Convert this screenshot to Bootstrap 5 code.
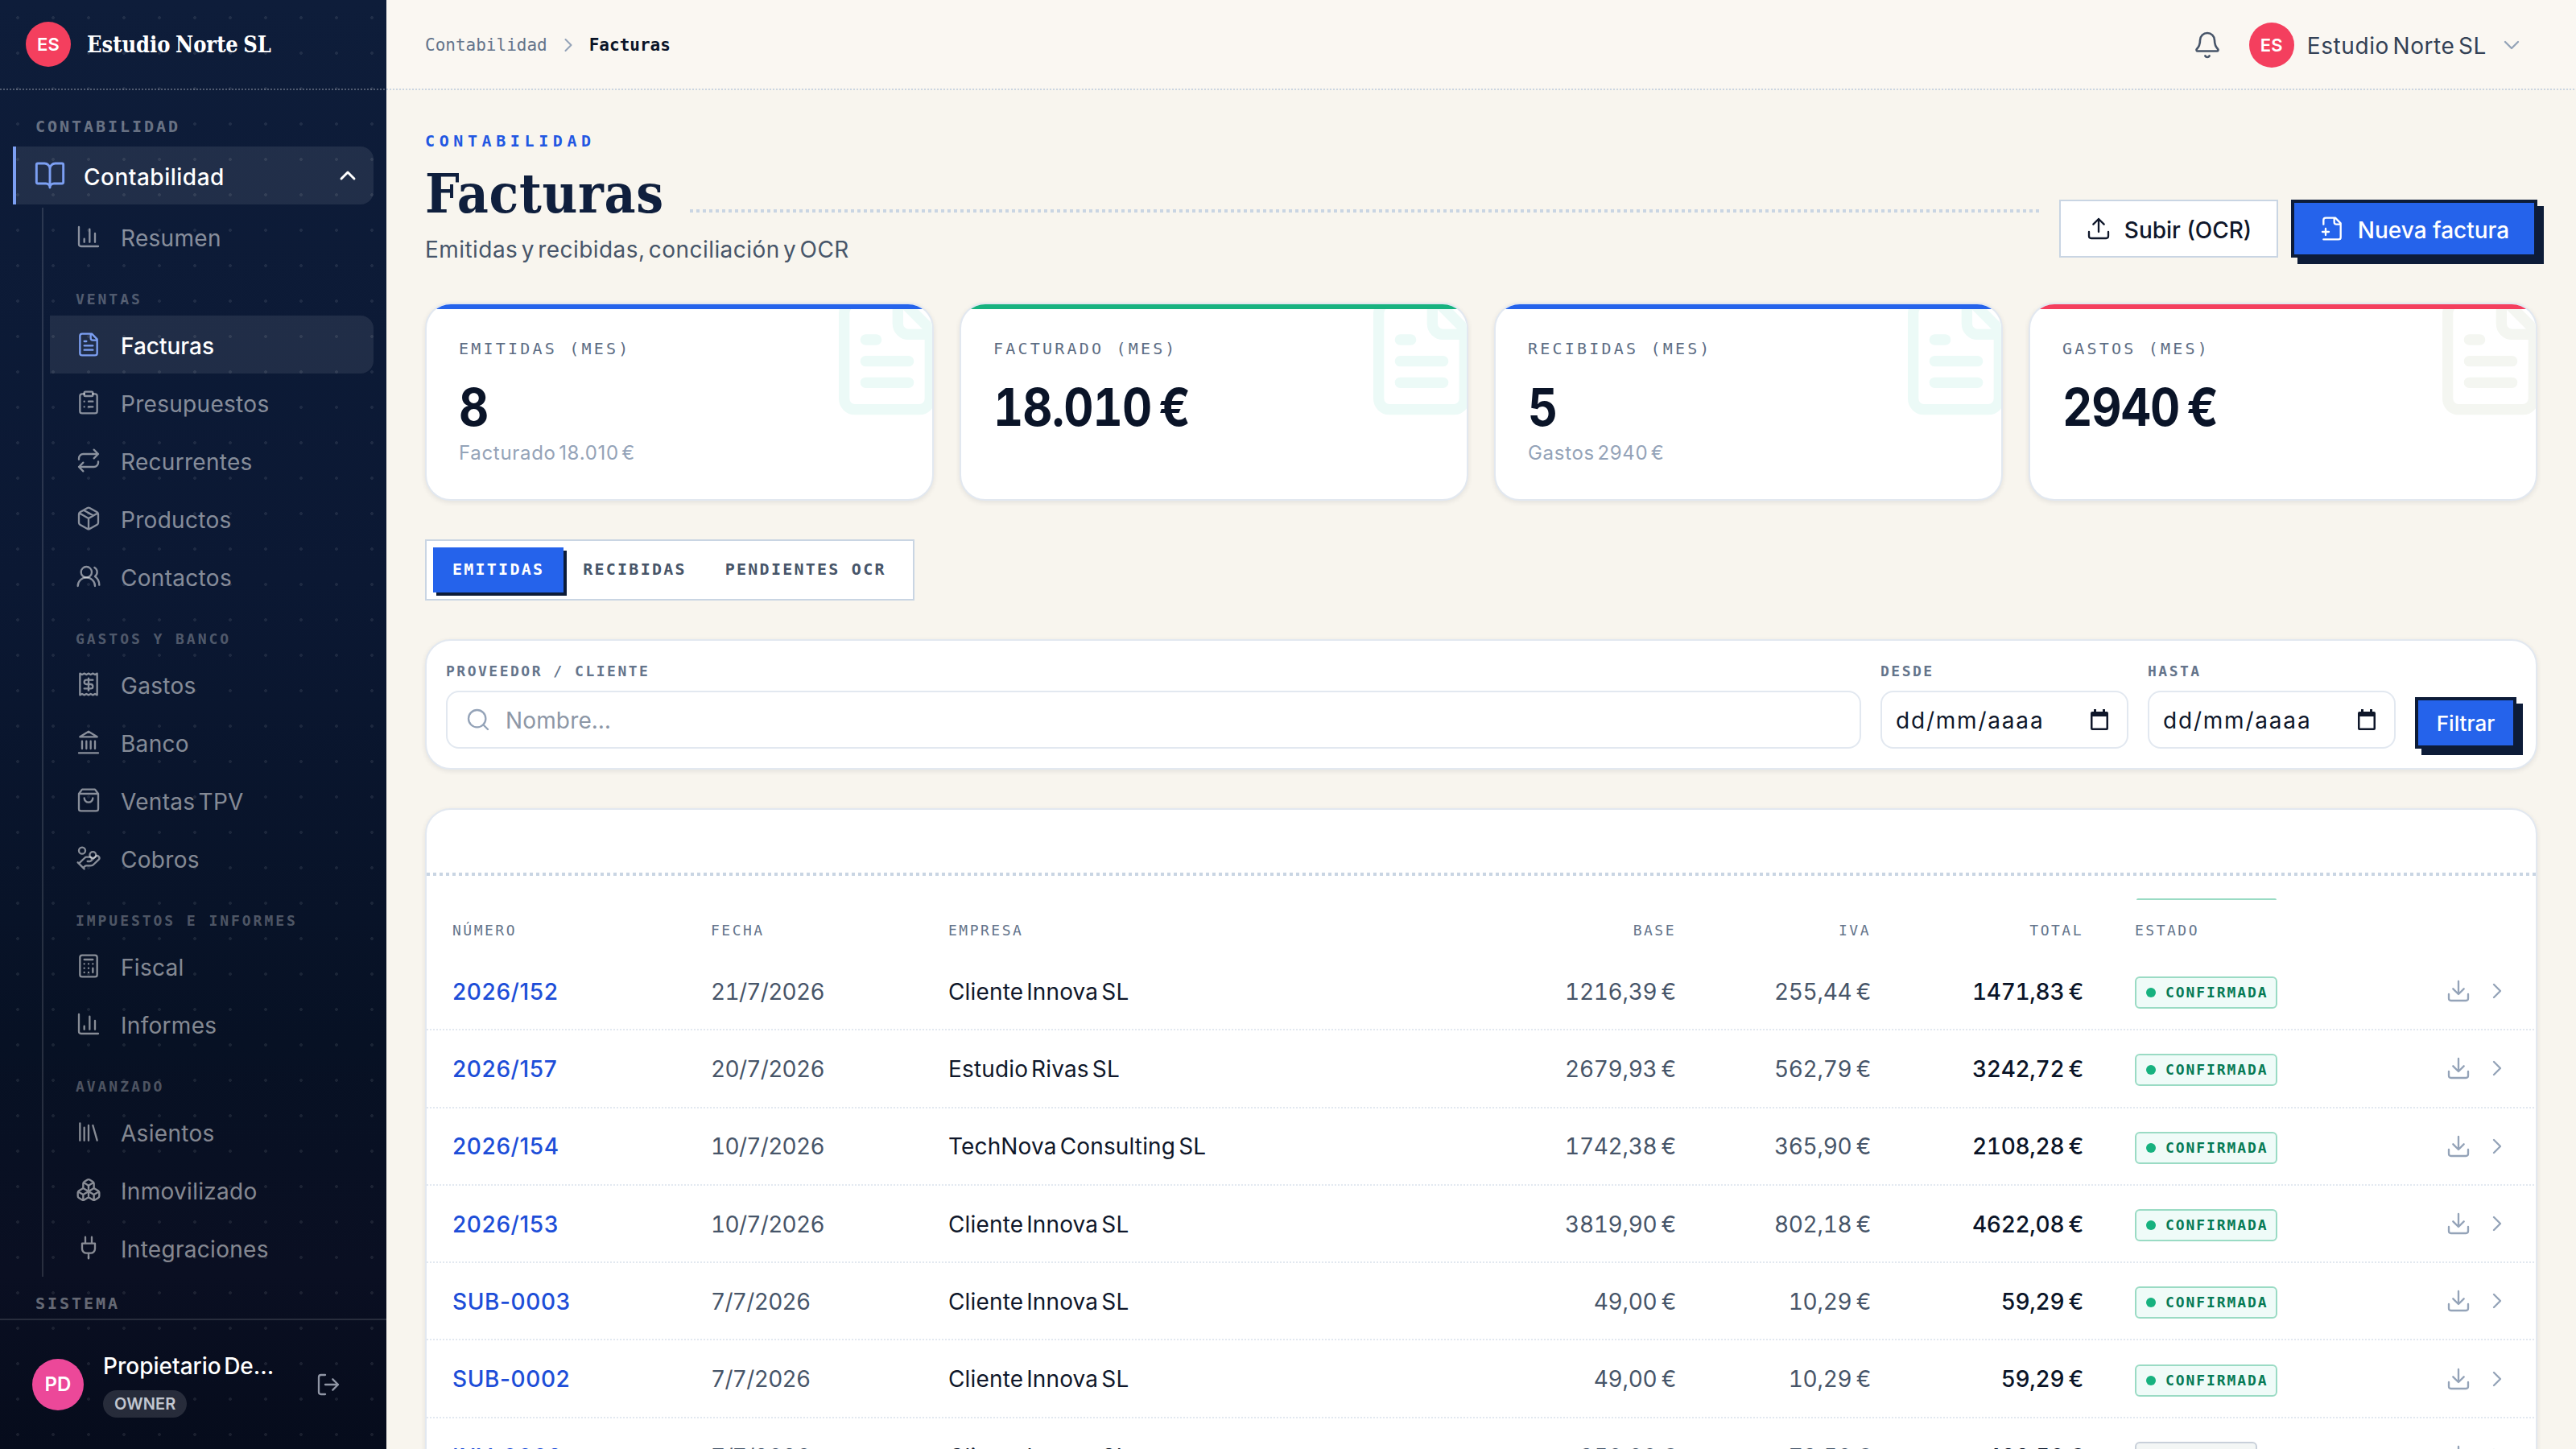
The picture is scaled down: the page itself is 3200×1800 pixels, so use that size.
<!DOCTYPE html>
<html lang="es">
<head>
<meta charset="utf-8">
<title>Facturas · Estudio Norte SL</title>
<link rel="stylesheet" href="https://cdn.jsdelivr.net/npm/bootstrap@5.3.0/dist/css/bootstrap.min.css">
<style>
:root{--navy:#0d1c38;--ink:#0a1428;--blue:#2563eb;--line:#c9d5e3;--soft:#e2e8f0;--mono:"DejaVu Sans Mono",monospace}
html,body{height:100%}
body{background:#f8f5ee;color:#0f172a;font:400 28px/36px Inter,"Noto Sans",sans-serif;overflow:hidden;letter-spacing:.15px;word-spacing:-4px}
svg{display:block;flex:none;fill:none;stroke:currentColor;stroke-width:1.75;stroke-linecap:round;stroke-linejoin:round}
.i32{width:32px;height:32px}.i36{width:36px;height:36px}.i40{width:40px;height:40px}.i28{width:28px;height:28px}
.shell{height:1800px;width:3200px;overflow:hidden}
.side{width:480px;flex:none;background:radial-gradient(circle at 50% 50%,rgba(255,255,255,.08) 0 1.6px,transparent 2.2px) 0 0/44px 44px,linear-gradient(180deg,#0e1d3a 0,#0b1833 40%,#071124 72%,#0a0f22 88%,#060c1c 100%)}
.dots2{height:2px;flex:none;background:repeating-linear-gradient(90deg,var(--dc) 0 2px,transparent 2px 4px)}
.dots4{height:4px;background:repeating-linear-gradient(90deg,var(--line) 0 4px,transparent 4px 8px)}
.brand{height:110px;padding-left:32px;gap:20px}
.avatar{width:56px;height:56px;border-radius:50%;background:#f43f5e;color:#fff;font-size:22px;font-weight:600;flex:none}
.brand b{font:700 27px/36px "DejaVu Serif Condensed","DejaVu Serif",serif;font-stretch:condensed;color:#fff;letter-spacing:0;word-spacing:-2px;padding-top:1px}
.cap1{font:700 20px/24px var(--mono);letter-spacing:2.95px;word-spacing:0;color:rgba(255,255,255,.4);padding-left:44px}
.cap2{font:700 18px/22px var(--mono);letter-spacing:2.95px;word-spacing:0;color:rgba(255,255,255,.3);padding:31px 0 9px 32px}
.parent{height:72px;margin:13px 16px 4px;border-left:4px solid #7c9ff2;border-radius:0 16px 16px 0;background:rgba(255,255,255,.085);color:#fff;font-weight:500;padding:0 16px 0 22px}
.parent span{padding:3px 0 0 22px;letter-spacing:.5px}
.sub{margin-left:52px;border-left:2px solid rgba(255,255,255,.13);padding:0 16px 0 8px;height:1328px}
.leaf{height:72px;padding-left:32px;gap:24px;color:rgba(255,255,255,.52);border-radius:0 16px 16px 0;letter-spacing:.3px}
.leaf span{padding-top:3px}
.leaf.on{background:rgba(255,255,255,.085);color:#fff;font-weight:500;letter-spacing:0}
.leaf.on svg,.parent>svg:first-child{color:#7c9ff2}
.foot{height:162px;border-top:2px solid rgba(255,255,255,.13);padding:0 56px 0 40px;gap:24px}
.foot .avatar{width:64px;height:64px;background:#ec4899;font-size:24px}
.owner{font-weight:500;letter-spacing:0}
.role{display:inline-block;background:rgba(255,255,255,.13);border-radius:17px;height:34px;font-size:20px;line-height:34px;font-weight:600;color:#c2c6cf;padding:0 14px;letter-spacing:.1px}
.top{height:110px;background:#faf7f2;padding:2px 64px 0 48px}
.top #user{letter-spacing:.6px;padding-top:2px;color:#334155}
.crumb{font:400 21px/30px var(--mono);letter-spacing:0;word-spacing:0;color:#64748b}
.crumb b{color:var(--ink)}
.page{padding:48px 48px 0}
.eyebrow{font:700 20px/24px var(--mono);letter-spacing:5.6px;color:#2257e2;margin-top:3px}
h1.title{font:700 67px/72px "DejaVu Serif Condensed","DejaVu Serif",serif;font-stretch:condensed;color:#0f1f3d;margin:0;letter-spacing:.7px;padding-top:1px;height:72px}
.btn{--bs-btn-border-radius:0;font-size:28px;line-height:36px;font-weight:500;display:flex;align-items:center;padding:0;justify-content:center}
.btn span{padding-top:3px}
.btn-o{height:72px;width:272px;border:2px solid var(--line);background:#fff;color:#0f172a;gap:16px}
.btn-n{height:72px;width:306px;border:4px solid var(--navy);background:var(--blue);color:#fff;gap:16px;box-shadow:8px 8px 0 var(--navy)}
.panel{background:#fff;border:2px solid var(--soft);border-radius:32px;box-shadow:0 2px 6px rgba(15,23,42,.09)}
.kpi{position:relative;overflow:hidden;flex:1;height:246px;padding:41px 40px 0}
.kpi::before{content:"";position:absolute;left:0;right:0;top:0;height:6px;background:var(--c);z-index:1}
.kpi>svg{position:absolute;right:-24px;top:-16px;width:160px;height:160px;stroke-width:2;color:#ecfaf7}
.kpi.warm>svg{color:#f4f6f1}
.kl{font:400 20px/28px var(--mono);letter-spacing:3.2px;word-spacing:0;color:#5d6d84}
.kv{font-size:64px;line-height:80px;font-weight:700;color:var(--ink);margin-top:19px;font-variant-numeric:tabular-nums;letter-spacing:-1px;word-spacing:-6px;transform:scaleX(.9);transform-origin:0 50%}
.ks{font-size:24px;line-height:32px;color:#94a3b8;letter-spacing:.7px;padding-top:1px}
.tabs{border:2px solid var(--line);background:#fff;width:608px;height:76px;padding:8px;font:700 20px/54px var(--mono);letter-spacing:2.24px;word-spacing:0;color:#475569}
.tabs span{padding:0 24px;height:56px}
.tabs .on{background:var(--blue);color:#fff;box-shadow:4px 4px 0 var(--navy)}
.fl{font:700 18px/24px var(--mono);letter-spacing:2.5px;word-spacing:0;color:#64748b;margin-bottom:12px}
.filter{height:162px;padding:26px 24px 0;gap:24px}
.field{height:72px;border:2px solid var(--soft);border-radius:16px;padding:0 20px 0 17px;color:#0f172a}
.field span{padding-top:2px}
.date{letter-spacing:1.8px}
.btn-n.sm{width:126px;height:64px;font-size:26px}
.btn-n.sm span{padding:1px 0 0}
.list{height:1000px;border-radius:32px 32px 0 0;overflow:hidden}
.inv{display:grid;grid-template-columns:321px 295px 704px 264px 242px 264px 338px 192px}
.inv>*{padding:0 32px;white-space:nowrap}
.inv>:nth-child(n+4):nth-child(-n+6){text-align:right}
.hd{font:400 18px/24px var(--mono);letter-spacing:2.5px;word-spacing:0;color:#64748b;padding:56px 0 16px}
.row-i{height:94.3px;align-items:center}
.row-i>:nth-child(-n+6){padding-top:1.5px}
.num{color:#1d4ed8;font-weight:500;letter-spacing:.6px}
.mut{color:#475569}
.row-i .mut,.tot{font-variant-numeric:tabular-nums;letter-spacing:-.3px;word-spacing:-2px}
.row-i .mut:nth-child(2){letter-spacing:-.7px}
.tot{color:var(--ink);font-weight:500}
.acts{color:#94a3b8}
.state{height:40px;border:2px solid #9adbc4;border-radius:6px;background:#effbf8;color:#067a55;font:700 18px/36px var(--mono);letter-spacing:1.9px;word-spacing:0;padding:0 10px 0 12px;gap:12px;display:inline-flex;align-items:center;vertical-align:top;margin-top:4px}
.state i{width:12px;height:12px;border-radius:50%;background:#17b27f}
.state.draft{border-color:#c8d0da;background:#f3f6f5;color:#475569}.state.draft i{background:#94a3b8}
.stub{height:2px;width:174px;background:#9adbc4;border-radius:2px 2px 0 0}
</style>
<script src="https://cdn.jsdelivr.net/npm/bootstrap@5.3.0/dist/js/bootstrap.bundle.min.js"></script>
</head>
<body>
<svg width="0" height="0" style="position:absolute">
<symbol id="book" viewBox="0 0 24 24"><path d="M12 7v14M3 18a1 1 0 0 1-1-1V4a1 1 0 0 1 1-1h5a4 4 0 0 1 4 4 4 4 0 0 1 4-4h5a1 1 0 0 1 1 1v13a1 1 0 0 1-1 1h-6a3 3 0 0 0-3 3 3 3 0 0 0-3-3z"/></symbol>
<symbol id="chart" viewBox="0 0 24 24"><path d="M3 3v16a2 2 0 0 0 2 2h16M18 17V9M13 17V5M8 17v-3"/></symbol>
<symbol id="file" viewBox="0 0 24 24"><path d="M15 2H6a2 2 0 0 0-2 2v16a2 2 0 0 0 2 2h12a2 2 0 0 0 2-2V7ZM14 2v4a2 2 0 0 0 2 2h4M10 9H8M16 13H8M16 17H8"/></symbol>
<symbol id="clip" viewBox="0 0 24 24"><rect x="8" y="2" width="8" height="4" rx="1"/><path d="M16 4h2a2 2 0 0 1 2 2v14a2 2 0 0 1-2 2H6a2 2 0 0 1-2-2V6a2 2 0 0 1 2-2h2M12 11h4M12 16h4M8 11h.01M8 16h.01"/></symbol>
<symbol id="repeat" viewBox="0 0 24 24"><path d="m17 2 4 4-4 4M3 11v-1a4 4 0 0 1 4-4h14M7 22l-4-4 4-4M21 13v1a4 4 0 0 1-4 4H3"/></symbol>
<symbol id="pack" viewBox="0 0 24 24"><path d="m7.5 4.27 9 5.15M21 8a2 2 0 0 0-1-1.73l-7-4a2 2 0 0 0-2 0l-7 4A2 2 0 0 0 3 8v8a2 2 0 0 0 1 1.73l7 4a2 2 0 0 0 2 0l7-4A2 2 0 0 0 21 16ZM3.3 7l8.7 5 8.7-5M12 22V12"/></symbol>
<symbol id="users" viewBox="0 0 24 24"><path d="M18 21a8 8 0 0 0-16 0"/><circle cx="10" cy="8" r="5"/><path d="M22 20c0-3.37-2-6.5-4-8a5 5 0 0 0-.45-8.3"/></symbol>
<symbol id="receipt" viewBox="0 0 24 24"><path d="M4 2v20l2-1 2 1 2-1 2 1 2-1 2 1 2-1 2 1V2l-2 1-2-1-2 1-2-1-2 1-2-1-2 1ZM16 8h-6a2 2 0 1 0 0 4h4a2 2 0 1 1 0 4H8M12 17.5v-11"/></symbol>
<symbol id="bank" viewBox="0 0 24 24"><path d="M3 22h18M6 18v-7M10 18v-7M14 18v-7M18 18v-7M12 2l8 5H4z"/></symbol>
<symbol id="bag" viewBox="0 0 24 24"><path d="M6 2 3 6v14a2 2 0 0 0 2 2h14a2 2 0 0 0 2-2V6l-3-4ZM3 6h18M16 10a4 4 0 0 1-8 0"/></symbol>
<symbol id="coins" viewBox="0 0 24 24"><path d="M11 15h2a2 2 0 1 0 0-4h-3c-.6 0-1.1.2-1.4.6L3 17M7 21l1.6-1.4c.3-.4.8-.6 1.4-.6h4c1.1 0 2.1-.4 2.8-1.2l4.6-4.4a2 2 0 0 0-2.75-2.91l-4.2 3.9M2 16l6 6"/><circle cx="16" cy="9" r="2.9"/><circle cx="6" cy="5" r="3"/></symbol>
<symbol id="calc" viewBox="0 0 24 24"><rect x="4" y="2" width="16" height="20" rx="2"/><path d="M8 6h8M16 14v4M16 10h.01M12 10h.01M8 10h.01M12 14h.01M8 14h.01M12 18h.01M8 18h.01"/></symbol>
<symbol id="lib" viewBox="0 0 24 24"><path d="m16 6 4 14M12 6v14M8 8v12M4 4v16"/></symbol>
<symbol id="boxes" viewBox="0 0 24 24"><path d="M2.97 12.92A2 2 0 0 0 2 14.63v3.24a2 2 0 0 0 .97 1.71l3 1.8a2 2 0 0 0 2.06 0L12 19v-5.5l-5-3-4.03 2.42ZM7 16.5l-4.74-2.85M7 16.5l5-3M7 16.5v5.17M12 13.5V19l3.97 2.38a2 2 0 0 0 2.06 0l3-1.8a2 2 0 0 0 .97-1.71v-3.24a2 2 0 0 0-.97-1.71L17 10.5l-5 3ZM17 16.5l-5-3M17 16.5l4.74-2.85M17 16.5v5.17M7.97 4.42A2 2 0 0 0 7 6.13v4.37l5 3 5-3V6.13a2 2 0 0 0-.97-1.71l-3-1.8a2 2 0 0 0-2.06 0l-3 1.8ZM12 8 7.26 5.15M12 8l4.74-2.85M12 13.5V8"/></symbol>
<symbol id="plug" viewBox="0 0 24 24"><path d="M12 22v-5M9 8V2M15 8V2M18 8v5a4 4 0 0 1-4 4h-4a4 4 0 0 1-4-4V8Z"/></symbol>
<symbol id="out" viewBox="0 0 24 24"><path d="M9 21H5a2 2 0 0 1-2-2V5a2 2 0 0 1 2-2h4M16 17l5-5-5-5M21 12H9"/></symbol>
<symbol id="up" viewBox="0 0 24 24"><path d="m18 15-6-6-6 6"/></symbol>
<symbol id="down" viewBox="0 0 24 24"><path d="m6 9 6 6 6-6"/></symbol>
<symbol id="right" viewBox="0 0 24 24"><path d="m9 18 6-6-6-6"/></symbol>
<symbol id="bell" viewBox="0 0 24 24"><path d="M3.262 15.326A1 1 0 0 0 4 17h16a1 1 0 0 0 .74-1.673C19.41 13.956 18 12.499 18 8A6 6 0 0 0 6 8c0 4.499-1.411 5.956-2.738 7.326M10.268 21a2 2 0 0 0 3.464 0"/></symbol>
<symbol id="upload" viewBox="0 0 24 24"><path d="M21 15v4a2 2 0 0 1-2 2H5a2 2 0 0 1-2-2v-4M17 8l-5-5-5 5M12 3v12"/></symbol>
<symbol id="dl" viewBox="0 0 24 24"><path d="M21 15v4a2 2 0 0 1-2 2H5a2 2 0 0 1-2-2v-4M7 10l5 5 5-5M12 15V3"/></symbol>
<symbol id="plus" viewBox="0 0 24 24"><path d="M4 22h14a2 2 0 0 0 2-2V7l-5-5H6a2 2 0 0 0-2 2v4M14 2v4a2 2 0 0 0 2 2h4M3 15h6M6 12v6"/></symbol>
<symbol id="search" viewBox="0 0 24 24"><circle cx="11" cy="11" r="8"/><path d="m21 21-4.3-4.3"/></symbol>
<symbol id="cal" viewBox="0 0 24 26"><path fill="currentColor" stroke="none" fill-rule="evenodd" d="M5 0h3v3h8V0h3v3h2a2 2 0 0 1 2 2v19a2 2 0 0 1-2 2H3a2 2 0 0 1-2-2V5a2 2 0 0 1 2-2h2zM3.500 9v14.500h17V9z"/></symbol>
</svg>
<div class="shell d-flex">
  <aside class="side d-flex flex-column">
    <div class="brand d-flex align-items-center"><span class="avatar d-flex align-items-center justify-content-center">ES</span><b>Estudio Norte SL</b></div>
    <div class="dots2" style="--dc:rgba(255,255,255,.28)"></div>
    <nav class="flex-grow-1 overflow-hidden">
      <div class="cap1" style="margin-top:33px">CONTABILIDAD</div>
      <div class="parent d-flex align-items-center"><svg class="i40"><use href="#book"/></svg><span class="me-auto">Contabilidad</span><svg class="i32" style="stroke-width:2.2"><use href="#up"/></svg></div>
      <div class="sub" id="sub"></div>
      <div class="cap1" style="margin-top:21px">SISTEMA</div>
    </nav>
    <div class="foot d-flex align-items-center">
      <span class="avatar d-flex align-items-center justify-content-center">PD</span>
      <div class="me-auto text-white"><div class="owner">Propietario De…</div><div class="d-flex" style="padding-top:12px"><span class="role">OWNER</span></div></div>
      <svg class="i32" style="color:#9096a5"><use href="#out"/></svg>
    </div>
  </aside>
  <main class="flex-grow-1">
    <header class="top d-flex align-items-center">
      <div class="crumb d-flex align-items-center me-auto"><span>Contabilidad</span><svg class="i28" style="margin:0 12px;color:#94a3b8"><use href="#right"/></svg><b>Facturas</b></div>
      <svg class="i36" style="color:#475569"><use href="#bell"/></svg>
      <span class="avatar d-flex align-items-center justify-content-center" style="margin:0 16px 0 34px">ES</span>
      <span id="user">Estudio Norte SL</span>
      <svg class="i32" style="color:#94a3b8;margin-left:15px"><use href="#down"/></svg>
    </header>
    <div class="dots2" style="--dc:#cbd5e1"></div>
    <div class="page">
      <div class="eyebrow">CONTABILIDAD</div>
      <div class="d-flex">
        <div class="flex-grow-1">
          <div class="d-flex align-items-center" style="margin:17px 0 16px"><h1 class="title">Facturas</h1><div class="dots4 flex-grow-1" style="margin:44px 22px 0 32px"></div></div>
          <div class="mut" style="letter-spacing:.45px">Emitidas y recibidas, conciliación y OCR</div>
        </div>
        <div class="d-flex gap-3" style="padding-top:61px"><button class="btn btn-o"><svg class="i32"><use href="#upload"/></svg><span>Subir (OCR)</span></button><button class="btn btn-n"><svg class="i32"><use href="#plus"/></svg><span>Nueva factura</span></button></div>
      </div>
      <div class="d-flex" style="gap:32px;margin-top:48px">
        <div class="panel kpi" style="--c:#2563eb"><svg><use href="#file"/></svg><div class="kl">EMITIDAS (MES)</div><div class="kv">8</div><div class="ks">Facturado 18.010 €</div></div>
        <div class="panel kpi" style="--c:#17b27f"><svg><use href="#file"/></svg><div class="kl">FACTURADO (MES)</div><div class="kv">18.010 €</div></div>
        <div class="panel kpi" style="--c:#2563eb"><svg><use href="#file"/></svg><div class="kl">RECIBIDAS (MES)</div><div class="kv">5</div><div class="ks">Gastos 2940 €</div></div>
        <div class="panel kpi warm" style="--c:#f43f5e"><svg><use href="#file"/></svg><div class="kl">GASTOS (MES)</div><div class="kv">2940 €</div></div>
      </div>
      <div class="tabs d-flex" style="margin-top:48px"><span class="on">EMITIDAS</span><span>RECIBIDAS</span><span>PENDIENTES OCR</span></div>
      <div class="panel filter d-flex" style="margin-top:48px">
        <div class="flex-grow-1"><div class="fl">PROVEEDOR / CLIENTE</div><div class="field d-flex align-items-center" style="color:#8d97a6;padding-left:22px"><svg class="i32" style="color:#94a3b8;margin-right:18px"><use href="#search"/></svg><span>Nombre…</span></div></div>
        <div style="width:308px"><div class="fl">DESDE</div><div class="field d-flex align-items-center justify-content-between"><span class="date">dd/mm/aaaa</span><svg width="24" height="26" style="margin-right:2px"><use href="#cal"/></svg></div></div>
        <div style="width:308px"><div class="fl">HASTA</div><div class="field d-flex align-items-center justify-content-between"><span class="date">dd/mm/aaaa</span><svg width="24" height="26" style="margin-right:2px"><use href="#cal"/></svg></div></div>
        <button class="btn btn-n sm" style="margin-top:44px"><span>Filtrar</span></button>
      </div>
      <div class="panel list" style="margin-top:48px">
        <div style="height:78px"></div><div class="dots4"></div>
        <div style="height:0;padding:28px 0 0 2124px;margin-bottom:-28px"><div class="stub"></div></div>
        <div class="inv hd"><div>NÚMERO</div><div>FECHA</div><div>EMPRESA</div><div>BASE</div><div>IVA</div><div>TOTAL</div><div>ESTADO</div><div></div></div>
        <div id="rows"></div>
      </div>
    </div>
  </main>
</div>
<script>
const ic=(n,c='i32')=>`<svg class="${c}"><use href="#${n}"/></svg>`;
const menu=[['chart','Resumen'],'VENTAS',['file','Facturas'],['clip','Presupuestos'],['repeat','Recurrentes'],['pack','Productos'],['users','Contactos'],'GASTOS Y BANCO',['receipt','Gastos'],['bank','Banco'],['bag','Ventas TPV'],['coins','Cobros'],'IMPUESTOS E INFORMES',['calc','Fiscal'],['chart','Informes'],'AVANZADO',['lib','Asientos'],['boxes','Inmovilizado'],['plug','Integraciones']];
document.getElementById('sub').innerHTML=menu.map(m=>typeof m==='string'?`<div class="cap2">${m}</div>`:`<div class="leaf d-flex align-items-center ${m[1]==='Facturas'?'on':''}">${ic(m[0])}<span>${m[1]}</span></div>`).join('');
const rows=[['2026/152','21/7/2026','Cliente Innova SL','1216,39','255,44','1471,83'],['2026/157','20/7/2026','Estudio Rivas SL','2679,93','562,79','3242,72'],['2026/154','10/7/2026','TechNova Consulting SL','1742,38','365,90','2108,28'],['2026/153','10/7/2026','Cliente Innova SL','3819,90','802,18','4622,08'],['SUB-0003','7/7/2026','Cliente Innova SL','49,00','10,29','59,29'],['SUB-0002','7/7/2026','Cliente Innova SL','49,00','10,29','59,29'],['INV-0002','7/7/2026','Cliente Innova SL','350,00','73,50','423,50',1]];
document.getElementById('rows').innerHTML=rows.map(r=>`<div class="inv row-i"><div class="num">${r[0]}</div><div class="mut">${r[1]}</div><div>${r[2]}</div><div class="mut">${r[3]} €</div><div class="mut">${r[4]} €</div><div class="tot">${r[5]} €</div><div><span class="state ${r[6]?'draft':''}"><i></i>${r[6]?'BORRADOR':'CONFIRMADA'}</span></div><div class="acts d-flex justify-content-end gap-3">${ic('dl')}${ic('right')}</div></div><div class="dots2" style="--dc:#e2e8f0"></div>`).join('');
</script>
</body>
</html>
